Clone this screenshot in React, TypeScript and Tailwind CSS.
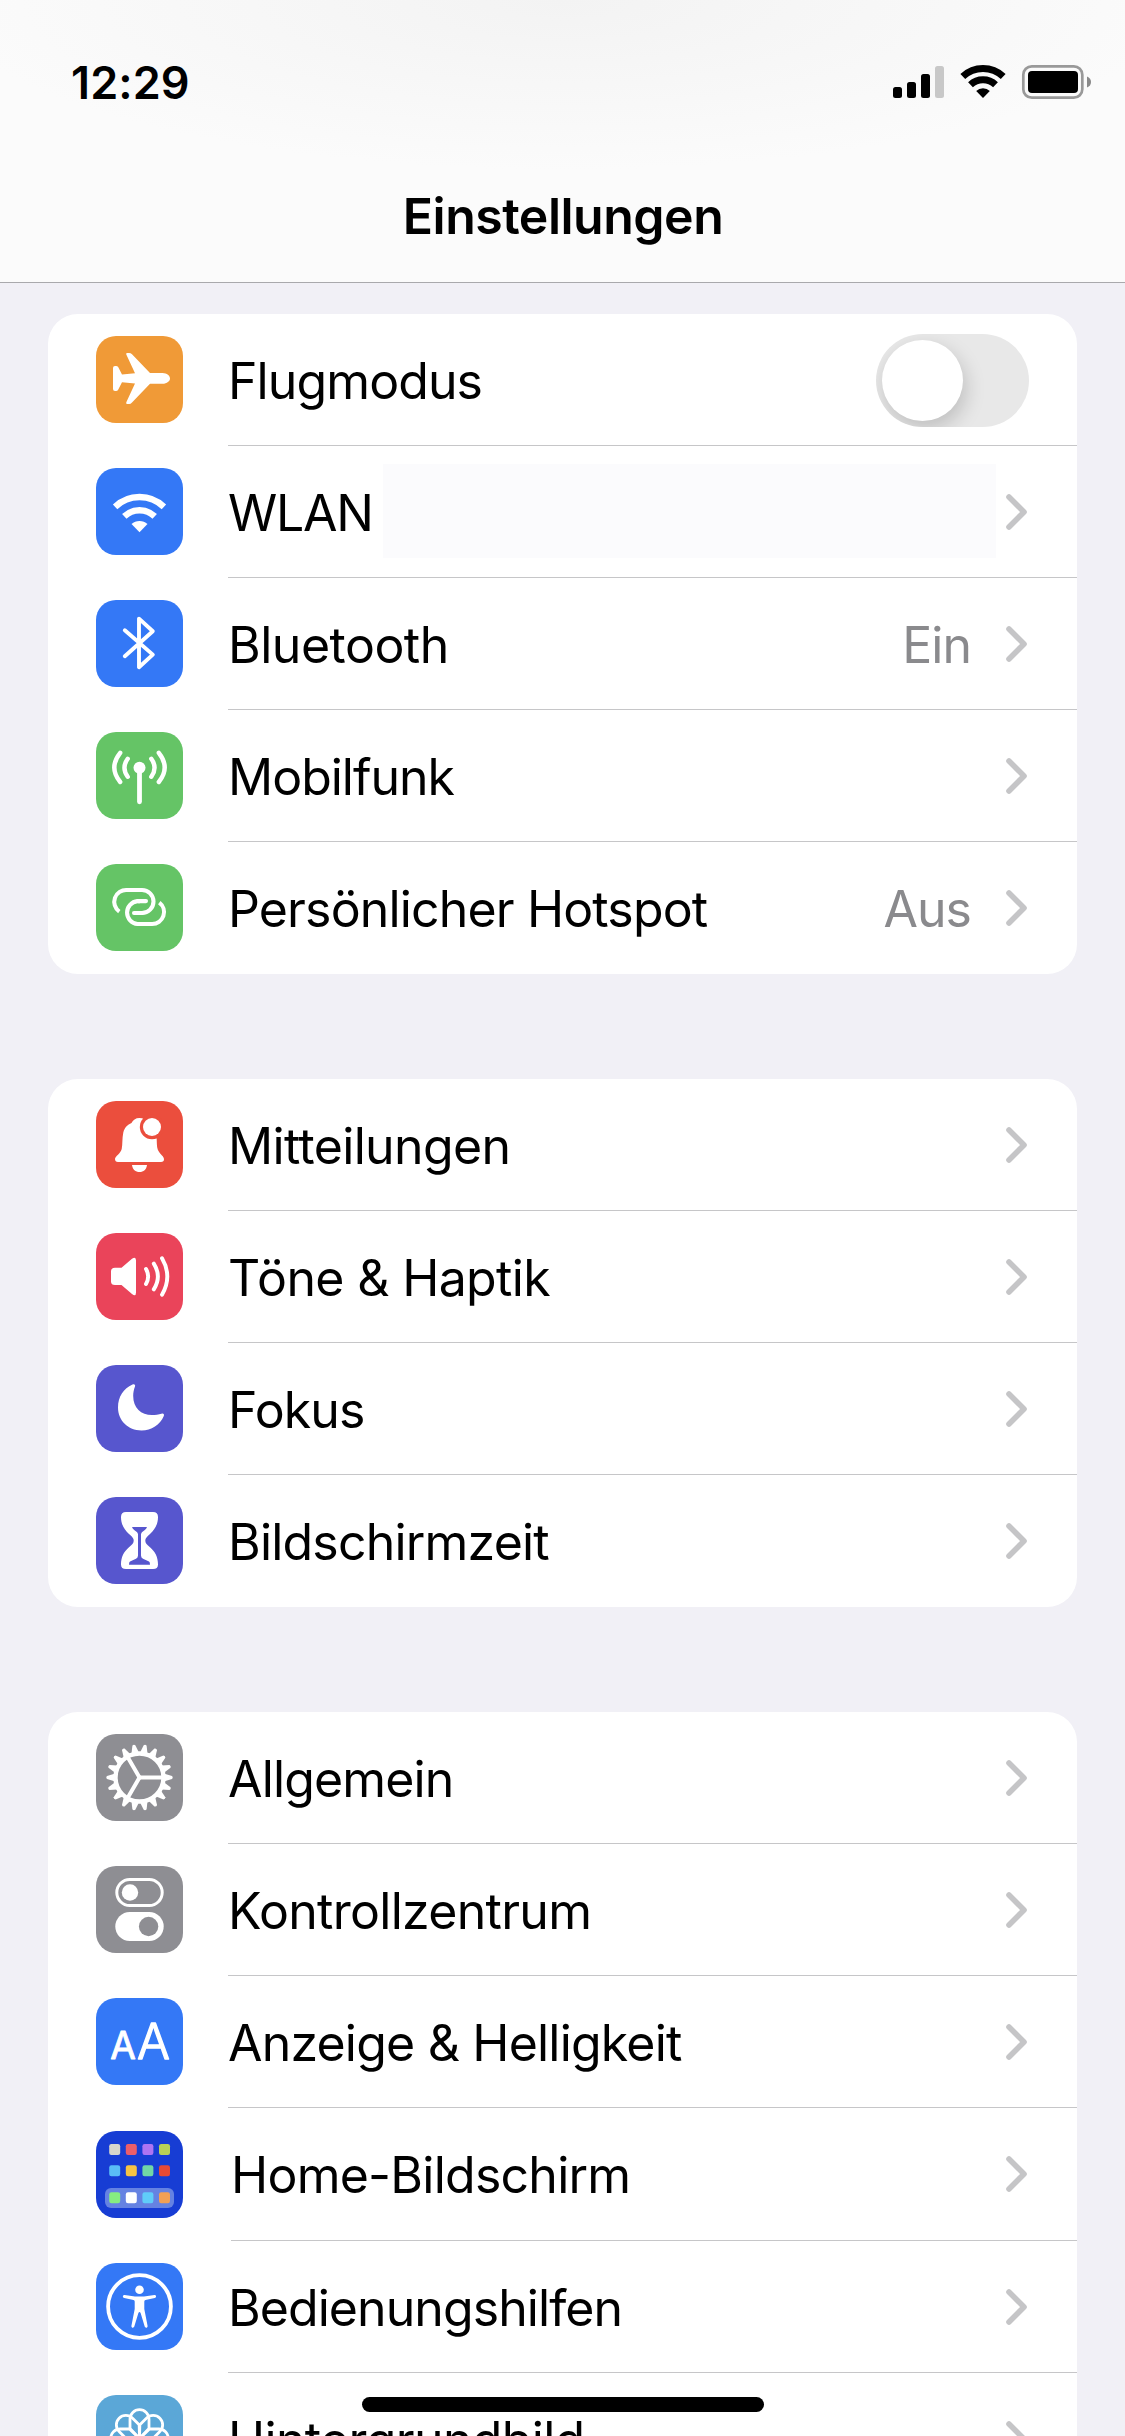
import * as React from "react"

type IconProps = { className: string, children?: React.ReactNode }

function AppIcon({ className, children }: IconProps) {
    return (
        <div className={`w-[87px] h-[87px] shrink-0 rounded-[20px] overflow-hidden ${className}`}>
            <svg viewBox="0 0 87 87" className="block w-full h-full" fill="none" strokeLinecap="round" strokeLinejoin="round">
                {children}
            </svg>
        </div>
    )
}

const airplane = (
    <AppIcon className="bg-[#f09a37]">
        <path fill="#fff" d="M17 32Q17 30 19 30H20Q21.5 30 22.3 31.3L26 38.4L39 37.2L30.3 18.5Q29.7 17 31 17H33Q34.8 17 36 18.3L54 37.1H66.5C71 37.1 74 40 74 42.4C74 45 71 47.7 66.5 47.7H54L36 66.5Q34.8 68 33 68H31Q29.7 68 30.3 66.3L39 47.6L26 46.3L22.3 53.5Q21.5 55 20 55H19Q17 55 17 53Z" />
    </AppIcon>
)

const wifi = (
    <AppIcon className="bg-[#3478f6]">
        <g stroke="#fff" strokeWidth="6.4" strokeLinecap="butt">
            <path d="M19.1 38.9A35.2 35.2 0 0 1 67.9 38.9" />
            <path d="M28.3 48.4A22 22 0 0 1 58.7 48.4" />
        </g>
        <path fill="#fff" d="M43.5 64.3L35.5 56.1A11.6 11.6 0 0 1 51.5 56.1Z" />
    </AppIcon>
)

const bluetooth = (
    <AppIcon className="bg-[#3478f6]">
        <path stroke="#fff" strokeWidth="3.9" d="M28.8 30.3L56.8 54.6L43 67.2V18.6L56.8 31.2L28.8 56.2" />
    </AppIcon>
)

const antenna = (
    <AppIcon className="bg-[#65c466]">
        <circle cx="43.5" cy="35.8" r="6" fill="#fff" />
        <g stroke="#fff" strokeWidth="4.4">
            <path strokeWidth="4.8" d="M43.5 36V69.8" />
            <path d="M31.7 26.8Q25.2 35.7 31.7 44.8M55.3 26.8Q61.8 35.7 55.3 44.8" />
            <path d="M24.2 20.8Q12.4 35.7 24.2 50M62.8 20.8Q74.6 35.7 62.8 50" />
        </g>
    </AppIcon>
)

const hotspot = (
    <AppIcon className="bg-[#65c466]">
        <g stroke="#fff" strokeWidth="4.1">
            <path strokeLinecap="butt" d="M23.3 47.6A11.9 11.9 0 0 1 31 26H46A11.5 11.5 0 0 1 46 49H44" />
            <path d="M46 49H38" />
            <path strokeLinecap="butt" d="M44 37.1H41.5A11.5 11.5 0 0 0 41.5 60H56A11.9 11.9 0 0 0 63.3 38.6" />
            <path d="M50 37.1H42" />
        </g>
    </AppIcon>
)

const bell = (
    <AppIcon className="bg-[#eb4e3d]">
        <path fill="#fff" d="M19 58C19 55.2 24.8 52.5 25.7 48C26.7 43 26 38 27.3 31.5C28.5 26.5 31.5 23.8 35.5 22C37 19 39.5 17 43.5 17C47.5 17 50 19 51.5 22C57 25 60 30 60.6 36C61 43 60.6 46.5 62.5 50C64.5 53.5 68 55.5 68 58.3C68 60 67 61 65 61H22C20 61 19 60 19 58Z" />
        <path fill="#fff" d="M36 64H51C50.5 68.5 47.5 71 43.5 71C39.5 71 36.5 68.5 36 64Z" />
        <circle cx="56" cy="26" r="12.2" fill="#eb4e3d" />
        <circle cx="56" cy="26" r="9" fill="#fff" />
    </AppIcon>
)

const speaker = (
    <AppIcon className="bg-[#ea445a]">
        <path fill="#fff" d="M19 34.7H25.5L36 25.8Q40 23 40 27.5V59.5Q40 64 36 61L25.5 52H19Q15 52 15 48.5V38.2Q15 34.7 19 34.7Z" />
        <g stroke="#fff" strokeWidth="3.9">
            <path d="M50 36Q54.3 43.5 50 51" />
            <path d="M57.8 30.6Q66 43.5 57.8 56.4" />
            <path d="M66 25.3Q76.6 43.5 66 61.7" />
        </g>
    </AppIcon>
)

const moon = (
    <AppIcon className="bg-[#5756ce]">
        <path fill="#fff" d="M36.5 19.6C38.5 18.8 39.6 20 39 21.6C37.8 24.5 37.2 28 37.2 31C37.2 43 45 50 56 50C59.5 50 62.5 49.6 65.5 48.7C67.5 48.2 68.5 49.3 67.8 51C64 60 55.5 65.4 45.5 65.4C32 65.4 22 55.5 22 42.5C22 32 27.5 23.5 36.5 19.6Z" />
    </AppIcon>
)

const hourglass = (
    <AppIcon className="bg-[#5756ce]">
        <path fill="#fff" d="M30 15H57Q62 15 62 20C62 27 59 32.5 54 37C50.5 40 49.3 41.5 49.3 43.6C49.3 46 50.5 47.5 54 50.3C59 54.5 62 60 62 67.5Q62 72 57 72H30Q25 72 25 67.5C25 60 28 54.5 33 50.3C36.5 47.5 37.7 46 37.7 43.6C37.7 41.5 36.5 40 33 37C28 32.5 25 27 25 20Q25 15 30 15Z" />
        <path fill="#5756ce" d="M36 30H51Q50.5 31.8 48.5 33.2Q45 35.3 45 37V58.5Q45 60.8 47 61.8L53 64.6Q54 65.2 54 67.8H33Q33 65.2 34 64.6L40 61.8Q42 60.8 42 58.5V37Q42 35.3 38.5 33.2Q36.5 31.8 36 30Z" />
    </AppIcon>
)

const gear = (
    <AppIcon className="bg-[#8e8e93]">
        <circle cx="43.5" cy="43.5" r="24" stroke="#fff" strokeWidth="4.4" />
        {Array.from({ length: 18 }, (_, i) => (
            <path key={i} fill="#fff" d="M68.5 39.8L76 42Q77.4 43.5 76 45L68.5 47.2Z" transform={`rotate(${i * 20} 43.5 43.5)`} />
        ))}
        {[0, 120, 240].map(deg => (
            <path key={deg} stroke="#fff" strokeWidth="4" d="M43.5 43.5H67" transform={`rotate(${deg} 43.5 43.5)`} />
        ))}
    </AppIcon>
)

const switches = (
    <AppIcon className="bg-[#8e8e93]">
        <rect x="20.8" y="13.5" width="45.4" height="26" rx="13" stroke="#fff" strokeWidth="3" />
        <circle cx="34" cy="26.5" r="8.2" fill="#fff" />
        <rect x="19.3" y="46" width="48.4" height="29" rx="14.5" fill="#fff" />
        <circle cx="52.6" cy="60.5" r="9.7" fill="#8e8e93" />
    </AppIcon>
)

const textSize = (
    <AppIcon className="bg-[#3478f6]">
        <g fill="#fff" stroke="#fff" fontFamily="Inter, sans-serif">
            <text x="14.2" y="61.2" fontSize="38" fontWeight="400" strokeWidth="0.9" textLength="25.6" lengthAdjust="spacingAndGlyphs">A</text>
            <text x="41" y="61.2" fontSize="49.5" fontWeight="300" strokeWidth="1.3" textLength="33" lengthAdjust="spacingAndGlyphs">A</text>
        </g>
    </AppIcon>
)

const homeTiles = [
    { y: 13, colors: ["#d7d6cc", "#eb5e6a", "#ad74f3", "#b9d156"] },
    { y: 34.2, colors: ["#5abdf6", "#f6c444", "#71d7a6", "#e74a35"] },
    { y: 61.2, colors: ["#86ed80", "#ffffff", "#60ccf9", "#f2a055"] },
]

const homeScreen = (
    <AppIcon className="bg-[#173dd4]">
        <rect x="9" y="57" width="69" height="20" rx="6" fill="#6582e2" />
        {homeTiles.map(row => row.colors.map((color, i) => (
            <rect key={color} x={13.2 + i * 16.6} y={row.y} width="11" height="11" rx="2.2" fill={color} />
        )))}
    </AppIcon>
)

const accessibility = (
    <AppIcon className="bg-[#3478f6]">
        <circle cx="43.5" cy="43.5" r="31.4" stroke="#fff" strokeWidth="3.8" />
        <circle cx="43.5" cy="26.7" r="4.3" fill="#fff" />
        <path fill="#fff" d="M28.6 32L39 33.6H48L58.4 32C60.4 31.9 60.8 34.4 58.8 35L49.5 37Q48.3 37.3 48.3 38.5V46L51.6 63C51.7 65 49.3 65.4 48.7 63.6L44.6 50Q43.5 48 42.4 50L38.3 63.6C37.7 65.4 35.3 65 35.4 63L38.7 46V38.5Q38.7 37.3 37.5 37L28.2 35C26.2 34.4 26.6 31.9 28.6 32Z" />
    </AppIcon>
)

const flower = (
    <AppIcon className="bg-[#5ba7d7]">
        {Array.from({ length: 8 }, (_, i) => (
            <path key={i} stroke="#fff" strokeWidth="2.8" d="M43.5 43.5L34 33.5V24.2A9.5 9.5 0 0 1 53 24.2V33.5Z" transform={`rotate(${i * 45} 43.5 43.5)`} />
        ))}
    </AppIcon>
)

function Chevron() {
    return (
        <svg viewBox="0 0 21 36" className="w-[21px] h-9 shrink-0" fill="none">
            <path d="M3 3L18 18L3 33" stroke="#c5c5c7" strokeWidth="5.6" strokeLinecap="round" strokeLinejoin="round" />
        </svg>
    )
}

function Switch() {
    return (
        <div className="w-[153px] h-[93px] mt-px -mr-0.5 rounded-full bg-[#e8e8e8] p-1.5 overflow-hidden">
            <div className="size-[81px] rounded-full bg-white shadow-[3px_8px_20px_rgba(0,0,0,0.18)]" />
        </div>
    )
}

type RowProps = {
    icon: React.ReactNode
    label: string
    labelClass?: string
    value?: string
    control?: React.ReactNode
    last?: boolean
    tall?: boolean
}

function Row({ icon, label, labelClass = "tracking-[-0.8px]", value, control, last, tall }: RowProps) {
    return (
        <div className={`flex pl-12 ${tall ? "h-[133px]" : "h-[132px]"}`}>
            <div className={tall ? "pt-[23px]" : "pt-[22px]"}>{icon}</div>
            <div className={`flex flex-1 items-center pr-[50px] ${tall ? "ml-12 pb-px" : "ml-[45px]"} ${last ? "pb-px" : "border-b border-[#c6c6c8]"}`}>
                <span className={`whitespace-nowrap pt-[3px] text-[50px] leading-[60px] ${labelClass}`}>{label}</span>
                {control ?? (
                    <div className="ml-auto flex items-center">
                        {value && <span className="mr-[35px] pt-[3px] text-[50px] leading-[60px] tracking-[-1px] text-[#8a8a8d]">{value}</span>}
                        <Chevron />
                    </div>
                )}
            </div>
        </div>
    )
}

function Group({ children }: { children: React.ReactNode }) {
    return <div className="rounded-[30px] bg-white overflow-hidden shrink-0">{children}</div>
}

function StatusIcons() {
    return (
        <svg viewBox="0 0 200 36" className="w-[200px] h-9" fill="none">
            <rect x="1" y="23" width="9" height="11" rx="2.5" fill="#000" />
            <rect x="15" y="18" width="9" height="16" rx="2.5" fill="#000" />
            <rect x="29" y="10" width="9" height="24" rx="2.5" fill="#000" />
            <rect x="43" y="2" width="9" height="32" rx="2.5" fill="#c8c8c8" />
            <g stroke="#000" strokeWidth="7">
                <path d="M70.8 12.5A29.5 29.5 0 0 1 111.2 12.5" />
                <path d="M78.5 20.7A18.2 18.2 0 0 1 103.5 20.7" />
            </g>
            <path d="M91 34L84.2 27A10 10 0 0 1 97.8 27Z" fill="#000" />
            <rect x="131.3" y="2.3" width="59" height="31.4" rx="8.5" stroke="#999" strokeWidth="2.7" />
            <rect x="136" y="7" width="50" height="22" rx="4" fill="#000" />
            <path d="M195 12.5Q199 14 199 18Q199 22 195 23.5Z" fill="#8a8a8a" />
        </svg>
    )
}

export default function App() {
    return (
        <div className="relative flex h-[2436px] w-[1125px] flex-col overflow-hidden bg-[#f1f0f6] font-['Inter',sans-serif] text-black">
            <header className="h-[283px] shrink-0 border-b border-[#a9a9ac] bg-[radial-gradient(ellipse_620px_170px_at_50%_0%,#f3f3f3,#fbfbfb)]">
                <div className="flex h-[164px] items-center justify-between pl-[71px] pr-[33px]">
                    <span className="text-[45px] font-semibold leading-none tracking-[0.1px]">12:29</span>
                    <StatusIcons />
                </div>
                <h1 className="pt-[22px] pl-px text-center text-[50px] font-semibold leading-[60px] tracking-[-0.5px]">Einstellungen</h1>
            </header>
            <main className="flex flex-col gap-[105px] px-12 pt-[31px]">
                <Group>
                    <Row icon={airplane} label="Flugmodus" labelClass="tracking-[-0.9px]" control={<div className="ml-auto"><Switch /></div>} />
                    <Row
                        icon={wifi}
                        label="WLAN"
                        labelClass="tracking-[-1.3px]"
                        control={<>
                            <div className="ml-auto mr-2.5 mb-px h-[94px] w-[613px] bg-[#fbfbfd]" />
                            <Chevron />
                        </>}
                    />
                    <Row icon={bluetooth} label="Bluetooth" labelClass="tracking-[-0.5px]" value="Ein" />
                    <Row icon={antenna} label="Mobilfunk" labelClass="tracking-[-1px]" />
                    <Row icon={hotspot} label="Persönlicher Hotspot" labelClass="tracking-[-0.85px]" value="Aus" last />
                </Group>
                <Group>
                    <Row icon={bell} label="Mitteilungen" labelClass="tracking-[-0.65px]" />
                    <Row icon={speaker} label="Töne & Haptik" labelClass="tracking-[-0.65px]" />
                    <Row icon={moon} label="Fokus" labelClass="tracking-[-0.9px]" />
                    <Row icon={hourglass} label="Bildschirmzeit" last />
                </Group>
                <Group>
                    <Row icon={gear} label="Allgemein" labelClass="tracking-[-0.85px]" />
                    <Row icon={switches} label="Kontrollzentrum" labelClass="tracking-[-0.7px]" />
                    <Row icon={textSize} label="Anzeige & Helligkeit" />
                    <Row icon={homeScreen} label="Home-Bildschirm" labelClass="tracking-[-0.75px]" tall />
                    <Row icon={accessibility} label="Bedienungshilfen" labelClass="tracking-[-0.93px]" />
                    <Row icon={flower} label="Hintergrundbild" labelClass="tracking-[-0.66px]" last />
                </Group>
            </main>
            <div className="absolute left-[362px] top-[2397px] h-[15px] w-[402px] rounded-full bg-black" />
        </div>
    )
}
